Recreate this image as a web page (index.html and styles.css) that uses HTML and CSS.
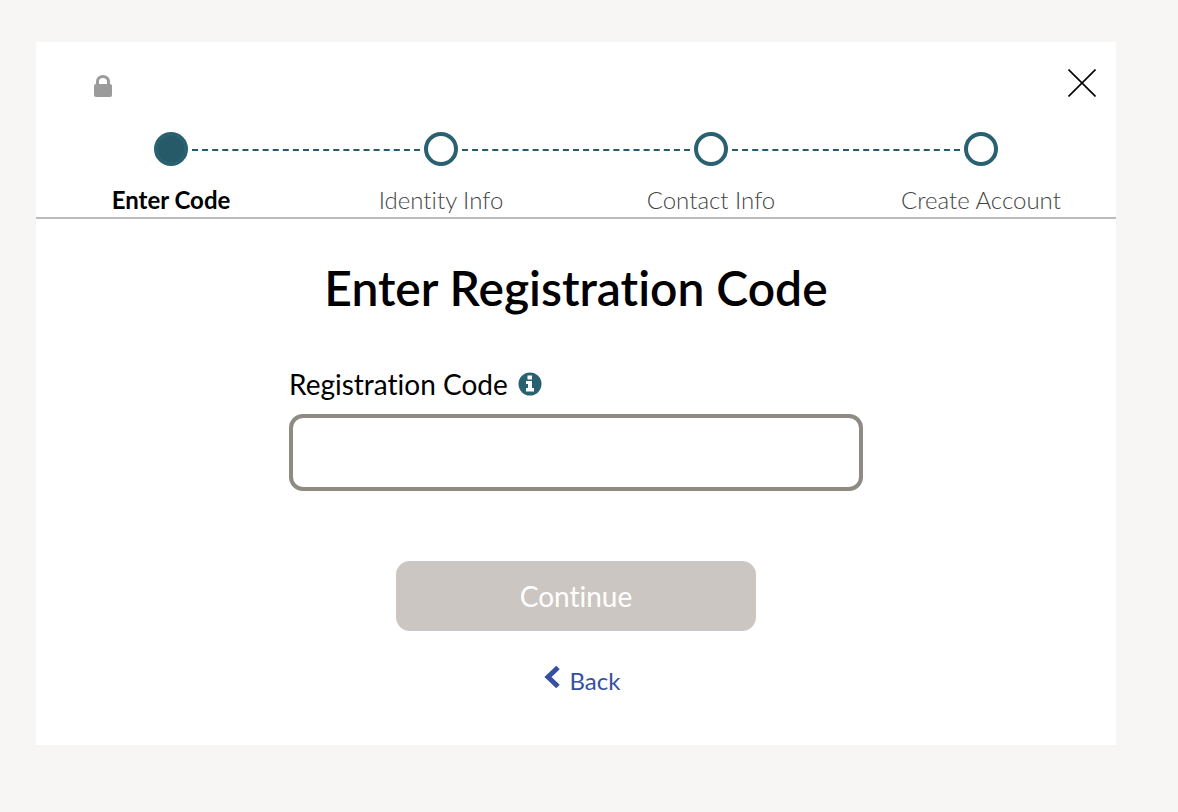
FILE: index.html
```html
<!DOCTYPE html>
<html lang="en">
<head>
<meta charset="utf-8">
<meta name="viewport" content="width=device-width, initial-scale=1">
<title>Enter Registration Code</title>
<link rel="stylesheet" href="styles.css">
</head>
<body>
<main class="card">
  <header class="header">
    <div class="topbar">
      <svg class="lock" viewBox="0 0 18 22" role="img" aria-label="Secure">
        <path d="M3.500 11V6.500a5.500 5 0 0 1 11 0V11" fill="none" stroke="#9b9b9b" stroke-width="3"/>
        <rect y="9" width="18" height="13" rx="2" fill="#9b9b9b"/>
      </svg>
      <button class="close" type="button" aria-label="Close">
        <svg viewBox="0 0 28 28"><path d="M0.500 0.500l27 27M27.500 0.500l-27 27" fill="none" stroke="#000" stroke-width="1.600"/></svg>
      </button>
    </div>
    <ol class="steps">
      <li class="step step-current" aria-current="step"><span class="dot"></span><span class="step-label">Enter Code</span></li>
      <li class="step"><span class="dot"></span><span class="step-label">Identity Info</span></li>
      <li class="step"><span class="dot"></span><span class="step-label">Contact Info</span></li>
      <li class="step"><span class="dot"></span><span class="step-label">Create Account</span></li>
    </ol>
  </header>
  <form class="form">
    <h1 class="title">Enter Registration Code</h1>
    <div class="field">
      <div class="label-row">
        <label for="code">Registration Code</label>
        <button class="info" type="button" aria-label="About the registration code">
          <svg viewBox="0 0 24 24"><circle cx="12" cy="12" r="11.500" fill="#296170"/><path d="M9.500 3.500h4.500v4H9.500zM8 9h6v7h2v3.500H8V16h2v-4H8z" fill="#fff"/></svg>
        </button>
      </div>
      <input class="code" id="code" type="text">
    </div>
    <button class="continue" type="submit" disabled>Continue</button>
    <a class="back" href="#">
      <svg class="chevron" viewBox="0 0 16 24"><path d="M14 2.500L4 12l10 9.500" fill="none" stroke="#374f9f" stroke-width="5"/></svg>
      <span>Back</span>
    </a>
  </form>
</main>
</body>
</html>
```
FILE: styles.css
```css
* {
  box-sizing: border-box;
}

body {
  margin: 0;
  padding: 42px 62px 67px 36px;
  background: #f7f6f4;
  color: #000;
  font-family: Lato, "Open Sans", sans-serif;
  font-variant-ligatures: none;
}

button {
  padding: 0;
  border: 0;
  background: none;
  font: inherit;
}

svg {
  display: block;
}

.card {
  background: #fff;
  padding-bottom: 48px;
}

.header {
  border-bottom: 2px solid #bbb;
}

.topbar {
  display: flex;
  justify-content: space-between;
  align-items: flex-end;
  padding: 27px 20px 33px 58px;
}

.lock {
  width: 18px;
  height: 22px;
}

.close svg {
  width: 28px;
  height: 28px;
}

.steps {
  display: grid;
  grid-template-columns: repeat(4, 1fr);
  margin: 0;
  padding: 0;
  list-style: none;
}

.step {
  position: relative;
  display: flex;
  flex-direction: column;
  align-items: center;
  gap: 18px;
  padding: 2px 0;
}

.step:not(:last-child)::after {
  content: "";
  position: absolute;
  top: 19px;
  left: calc(50% + 21px);
  width: calc(100% - 42px);
  border-top: 2px dashed #265a68;
}

.dot {
  width: 34px;
  height: 34px;
  border: 4px solid #296170;
  border-radius: 50%;
}

.step-current .dot {
  background: #265a68;
}

.step-label {
  color: #444;
  font-size: 24px;
  font-weight: 300;
  line-height: 31px;
}

.step-current .step-label {
  color: #000;
  font-weight: 700;
}

.form {
  display: flex;
  flex-direction: column;
  align-items: center;
  padding: 39px 20px 0;
}

.title {
  margin: 0 0 48px;
  font-size: 48px;
  font-weight: 600;
  line-height: 60px;
}

.field {
  width: 100%;
  max-width: 574px;
  margin-bottom: 70px;
}

.label-row {
  display: flex;
  align-items: center;
  gap: 10px;
  margin-bottom: 12px;
  font-size: 28px;
  line-height: 36px;
}

.info svg {
  width: 24px;
  height: 24px;
}

.code {
  display: block;
  width: 100%;
  height: 77px;
  padding: 0 20px;
  border: 4px solid #8f8b83;
  border-radius: 14px;
  background: #fff;
  font: inherit;
  font-size: 28px;
}

.continue {
  width: 100%;
  max-width: 360px;
  height: 70px;
  margin-bottom: 34px;
  border-radius: 14px;
  background: #ccc6c2;
  color: #fff;
  font-size: 28px;
}

.back {
  display: flex;
  align-items: flex-start;
  gap: 10px;
  padding-left: 12px;
  color: #374f9f;
  font-size: 24px;
  line-height: 32px;
  text-decoration: none;
}

.chevron {
  width: 16px;
  height: 24px;
}
```
